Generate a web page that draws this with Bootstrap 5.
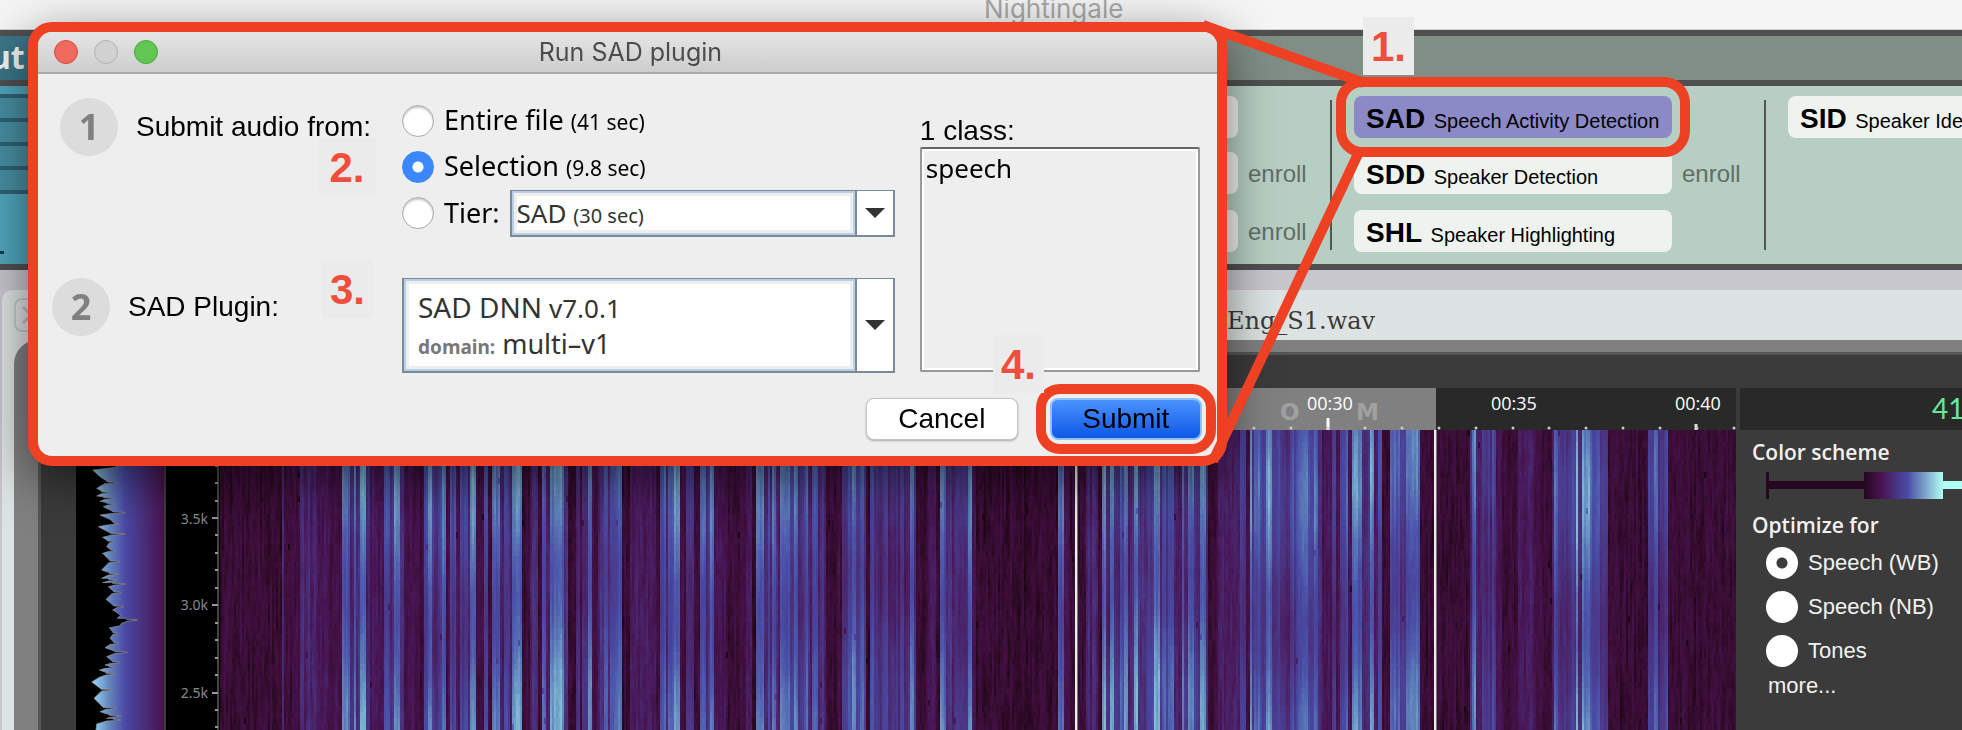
<!DOCTYPE html>
<html lang="en">
<head>
<meta charset="utf-8">
<meta name="viewport" content="width=device-width, initial-scale=1">
<title>Nightingale</title>
<link href="https://cdn.jsdelivr.net/npm/bootstrap@5.3.0/dist/css/bootstrap.min.css" rel="stylesheet">
<style>
:root { --accent: #ee4023; --rule: #505050; }
body { font-family: "Liberation Sans", Arial, sans-serif; color: #000; background: #c8c6cd; overflow: hidden; line-height: 1; }
.app { min-height: 100vh; }
.app-title { height: 30px; background: #f5f5f5; border-bottom: 1px solid #d0d0d0; font: 26px/28px Inter, sans-serif; color: #a9a9a9; padding-left: 984px; margin-bottom: 0; }
.app-title span { display: block; margin-top: -5px; }

.ribbon { border-bottom: 6px solid var(--rule); }
.ribbon-head { height: 56px; border-top: 6px solid var(--rule); border-bottom: 6px solid var(--rule); }
.ribbon-body { height: 178px; }
.input-group-pane { flex: 0 0 872px; background: #51a5bc; }
.input-group-pane .ribbon-head { background: #3b7688; color: #f4f4f4; font: bold 32px/42px "Noto Sans", sans-serif; text-indent: -10px; margin: 0; }
.input-bars { list-style: none; margin: 0; padding: 8px 0 0; }
.input-bars li { height: 24px; background: #468fa4; border-top: 4px solid #2f6273; }
.input-bars li:last-child { height: 28px; border-bottom: 4px solid #2f6273; }
.tick-dash { width: 4px; height: 3px; background: #173c49; margin-top: 57px; }
.task-pane { background: #b7cfc2; overflow: hidden; }
.task-pane .ribbon-head { background: #808e86; }
.task-row { padding: 10px 0 0 48px; }
.task-divider { flex: none; width: 2px; height: 150px; background: #555; margin: 4px 22px 0 25px; }
.task-list { gap: 14px; flex: none; }
.task-line { gap: 10px; }
.task-btn { width: 318px; height: 42px; padding: 0 0 0 12px; border: 0; border-radius: 8px; background: #eff3f0; text-align: left; white-space: nowrap; font-size: 20px; line-height: 46px; color: #000; position: relative; }
.task-btn b { font-size: 28px; margin-right: 3px; }
.task-btn.active-task { background: #8c8ac6; }
.enroll { font-size: 24px; width: 57px; color: #626d66; text-decoration: none; line-height: 44px; }

.ringed { position: relative; }
.ringed::after { content: ""; position: absolute; inset: -19px -18px; border: 10px solid var(--accent); border-radius: 26px; z-index: 3; pointer-events: none; }

.file-win { margin: 20px 0 0 2px; background: #dde3e2; border-top-left-radius: 10px; }
.file-head { height: 50px; padding-left: 12px; font: 24px/28px "DejaVu Serif", serif; color: #3a3a3a; }
.file-head .file-label { margin-left: 1179px; padding-top: 11px; }
.close-tab { width: 34px; height: 34px; padding: 0; border: 2px solid #c3cac8; border-radius: 8px; background: none; flex: none; line-height: 0; }
.viewer { margin-left: 12px; padding: 12px 0 0 24px; background: #808080; border-top-left-radius: 24px; }
.viewer-in { background: #3b3b3b; border: solid #555; border-width: 3px 0 0 3px; padding-left: 35px; }
.toolbar-gap { height: 33px; }
.time-ruler { height: 42px; background: #292929; position: relative; overflow: hidden; }
.hist { width: 88px; background: #000; flex: none; }
.faxis { width: 56px; background: #000; border-left: 2px solid #3c3c3c; flex: none; }
.hist svg, .faxis svg, .time-ruler svg { display: block; }
.spectro { position: relative; background: #2c0a25; height: 300px; }
.spectro canvas { display: block; width: 100%; height: 100%; image-rendering: pixelated; }
.playhead { position: absolute; top: 0; bottom: 0; width: 3px; background: #eee; border-right: 1px solid #777; }

.side { width: 226px; flex: none; color: #f2f2f2; overflow: hidden; }
.side-read { height: 42px; margin-left: 4px; padding-left: 192px; background: #292929; color: #62ec9a; font: 28px/40px Lato, sans-serif; }
.side-body { padding: 10px 0 0 16px; font-size: 22px; }
.side-body h2 { font: 600 21px/24px "Open Sans", sans-serif; margin: 0; }
.slider-svg { display: block; margin: 8px 0 14px 14px; }
.side-opts { padding-top: 4px; }
.side-opt { height: 44px; margin-left: 14px; gap: 10px; white-space: nowrap; }
.side-opt input { appearance: none; width: 32px; height: 32px; border-radius: 50%; background: radial-gradient(#fff 80%, #ddd); margin: 0; flex: none; }
.side-opt input:checked { background: radial-gradient(circle, #3b3b3b 0 5px, #fff 6px); }
.side-more { display: block; color: #f2f2f2; text-decoration: none; margin: 2px 0 0 16px; }

.dlg { position: absolute; left: 28px; top: 22px; width: 61.1%; border: 10px solid var(--accent); border-radius: 24px; background: #eee; box-shadow: 0 14px 50px rgba(0,0,0,.5); z-index: 2; }
.dlg-title { height: 42px; padding: 0 16px; gap: 16px; background: linear-gradient(#e5e5e5, #cdcdcd); border-bottom: 2px solid #aaa; border-radius: 14px 14px 0 0; }
.dlg-title h1 { font: 25px/40px Inter, sans-serif; color: #4c4c4c; margin: 0; text-align: center; padding-right: 114px; }
.light { width: 24px; height: 24px; padding: 0; border: 1px solid; border-radius: 50%; }
.light-r { background: #ee6a5f; border-color: #d6493f; } .light-n { background: #d1d1d1; border-color: #b2b2b2; } .light-g { background: #62c655; border-color: #46a83a; }
.dlg-body { display: grid; grid-template-columns: 364px minmax(0, 1fr) 280px; padding: 24px 17px 15px 0; }
.dlg-fields { margin-right: 25px; font: 27px/34px "Noto Sans", sans-serif; }
.dlg-fields small { font-size: 21px; }
.step { font-size: 28px; height: 58px; gap: 18px; white-space: nowrap; }
.step-1 { padding-left: 22px; margin-bottom: 122px; }
.step-2 { padding-left: 14px; }
.step i { width: 58px; height: 58px; border-radius: 50%; background: #dcdcdc; color: #808080; font: bold 36px/58px "Noto Sans", sans-serif; text-align: center; }
.src { height: 46px; gap: 10px; white-space: nowrap; }
.src > input { appearance: none; width: 32px; height: 32px; margin: 0; flex: none; border-radius: 50%; border: 1px solid #aaa; background: #fff; box-shadow: inset 0 2px 2px #ccc; }
.src > input:checked { border-color: #3b87ff; background: radial-gradient(circle, #fff 0 5px, #3b87ff 6px); box-shadow: none; }
.combo { position: relative; display: flex; border: 2px solid #7a8a99; border-top-width: 1px; background: #fff; color: #333; height: 47px; }
.combo-text { border: 2px solid #b8cfe5; outline: 3px solid #eee; outline-offset: -5px; padding: 3px; }
.combo-tier { font-size: 26px; }
.combo-tier small { font-size: 20px; }
.combo-arrow { width: 38px; border-left: 2px solid #7a8a99; flex: none; }
.combo-arrow::before { content: ""; border: solid transparent; border-width: 10px 10px 0; border-top-color: #333; }
.combo select { position: absolute; inset: 0; width: 100%; height: 100%; opacity: 0; }
.combo-plugin { height: 95px; margin-top: 42px; }
.combo-plugin .combo-text { padding: 8px 12px; line-height: 36px; }
.combo-plugin .plug-name { font-size: 28px; }
.combo-plugin .plug-ver { font-size: 26px; }
.combo-plugin .plug-dom { font: bold 19px/32px "Noto Sans", sans-serif; color: #777; }
.class-label { font-size: 28px; line-height: 32px; margin-top: 17px; }
.class-list { width: 100%; height: 225px; padding: 1px 4px; border: 2px solid #999; border-top-color: #666; outline: 2px solid #fff; outline-offset: -4px; background: #eee; font: 26px/36px "Noto Sans", sans-serif; overflow: hidden; }
.class-list option { padding: 0; color: #000; min-height: 36px; }
.dlg-foot { gap: 32px; padding: 0 15px 16px 0; margin-top: 10px; }
.dlg-btn { width: 152px; height: 42px; border-radius: 8px; border: 1px solid #c4c4c4; background: #fff; font-size: 28px; line-height: 38px; padding: 0; color: #000; box-shadow: 0 1px 2px #aaa; }
.dlg-btn.go { border: 2px solid #8fc0ff; background: linear-gradient(#4b92ff, #0d58e6); box-shadow: none; }
.dlg-btn.ringed::after { inset: -16px; border-radius: 24px; }

.links { position: absolute; left: 0; top: 0; z-index: 4; pointer-events: none; }
.note { position: absolute; z-index: 5; width: 51px; height: 58px; background: #ebebeb; color: #f04e3c; font: bold 42px/60px "Liberation Sans", Arial, sans-serif; text-align: center; }
.note-1 { left: 1363px; top: 17px; } .note-2 { left: 318px; top: 138px; width: 58px; } .note-3 { left: 322px; top: 260px; } .note-4 { left: 993px; top: 335px; }
</style>
</head>
<body>
<main class="app d-flex flex-column position-relative">
  <header class="app-title"><span>Nightingale</span></header>

  <section class="ribbon d-flex">
    <div class="input-group-pane">
      <h2 class="ribbon-head">ut</h2>
      <div class="ribbon-body">
        <ul class="input-bars"><li></li><li></li><li></li><li></li></ul>
        <div class="tick-dash"></div>
      </div>
    </div>
    <div class="task-pane flex-fill">
      <div class="ribbon-head"></div>
      <div class="ribbon-body task-row d-flex align-items-start">
        <div class="task-list d-flex flex-column">
          <div class="task-line d-flex"><div class="task-btn"></div></div>
          <div class="task-line d-flex"><div class="task-btn"></div><a class="enroll" href="#">enroll</a></div>
          <div class="task-line d-flex"><div class="task-btn"></div><a class="enroll" href="#">enroll</a></div>
        </div>
        <div class="task-divider"></div>
        <div class="task-list d-flex flex-column">
          <div class="task-line d-flex"><button class="task-btn active-task ringed"><b>SAD</b> Speech Activity Detection</button></div>
          <div class="task-line d-flex"><button class="task-btn"><b>SDD</b> Speaker Detection</button><a class="enroll" href="#">enroll</a></div>
          <div class="task-line d-flex"><button class="task-btn"><b>SHL</b> Speaker Highlighting</button></div>
        </div>
        <div class="task-divider"></div>
        <div class="task-list d-flex flex-column">
          <div class="task-line d-flex"><button class="task-btn"><b>SID</b> Speaker Identification</button></div>
        </div>
      </div>
    </div>
  </section>

  <section class="file-win flex-fill">
    <div class="file-head d-flex align-items-center">
      <button class="close-tab"><svg width="28" height="28" viewBox="0 0 28 28" fill="none" stroke="#b9c0be" stroke-width="3"><path d="M6 6l16 16M22 6L6 22"/></svg></button>
      <span class="file-label">Eng_S1.wav</span>
    </div>
    <div class="viewer">
      <div class="viewer-in">
        <div class="toolbar-gap"></div>
        <div class="d-flex">
          <div class="hist"><div style="height:42px"></div>
            <svg width="88" height="300" viewBox="228 210 264 900">
              <defs><linearGradient id="hg"><stop offset=".22" stop-color="#8cc8ea"/><stop offset=".38" stop-color="#6484bc"/><stop offset=".56" stop-color="#4a49a4"/><stop offset="1" stop-color="#48124d"/></linearGradient></defs>
              <rect x="228" y="210" width="264" height="900" fill="url(#hg)"/>
              <polygon id="histEdge" fill="#000" stroke="#999" stroke-width="2"/>
            </svg>
          </div>
          <div class="faxis"><div style="height:42px"></div><svg id="freq" width="54" height="300" font-family="Noto Sans, sans-serif" font-size="14" fill="#8a8a8a"></svg></div>
          <div class="flex-fill" style="min-width:0">
            <div class="time-ruler"><svg id="ruler" width="1516" height="42" font-family="Open Sans, sans-serif"></svg></div>
            <div class="spectro">
              <canvas id="spec" width="758" height="50"></canvas>
              <div class="playhead" style="left:56.4%"></div>
              <div class="playhead" style="left:80.1%"></div>
            </div>
          </div>
          <aside class="side">
            <div class="side-read">41</div>
            <div class="side-body">
              <h2>Color scheme</h2>
              <svg class="slider-svg" width="200" height="27">
                <defs><linearGradient id="cg"><stop offset="0" stop-color="#25071f"/><stop offset=".2" stop-color="#48124d"/><stop offset=".55" stop-color="#4a4aa4"/><stop offset="1" stop-color="#b0fff3"/></linearGradient></defs>
                <path d="M0 0h3v9h96v8H3v10H0z" fill="#25071f"/><path d="M176 9h24v8h-24z" fill="#b0fff3"/><path d="M98 0h79v27H98z" fill="url(#cg)"/>
              </svg>
              <h2>Optimize for</h2>
              <div class="side-opts">
                <label class="side-opt d-flex align-items-center"><input type="radio" name="opt" checked>Speech (WB)</label>
                <label class="side-opt d-flex align-items-center"><input type="radio" name="opt">Speech (NB)</label>
                <label class="side-opt d-flex align-items-center"><input type="radio" name="opt">Tones</label>
              </div>
              <a class="side-more" href="#">more...</a>
            </div>
          </aside>
        </div>
      </div>
    </div>
  </section>

  <form class="dlg">
    <div class="dlg-title d-flex align-items-center">
      <button type="button" class="light light-r"></button><button type="button" class="light light-n"></button><button type="button" class="light light-g"></button>
      <h1 class="flex-fill">Run SAD plugin</h1>
    </div>
    <div class="dlg-body">
      <div>
        <div class="step step-1 d-flex align-items-center"><i>1</i>Submit audio from:</div>
        <div class="step step-2 d-flex align-items-center"><i>2</i>SAD Plugin:</div>
      </div>
      <div class="dlg-fields">
        <div class="src d-flex align-items-center"><input type="radio" name="src" id="s1"><label for="s1">Entire file <small>(41 sec)</small></label></div>
        <div class="src d-flex align-items-center"><input type="radio" name="src" id="s2" checked><label for="s2">Selection <small>(9.8 sec)</small></label></div>
        <div class="src d-flex align-items-center"><input type="radio" name="src" id="s3"><label for="s3">Tier:</label>
          <div class="combo combo-tier flex-fill"><div class="combo-text flex-fill">SAD <small>(30 sec)</small></div><span class="combo-arrow d-flex align-items-center justify-content-center"></span><select aria-labelledby="s3"><option>SAD (30 sec)</option></select></div>
        </div>
        <div class="combo combo-plugin"><div class="combo-text flex-fill"><div><span class="plug-name">SAD DNN</span> <span class="plug-ver">v7.0.1</span></div><div><span class="plug-dom">domain:</span> multi–v1</div></div><span class="combo-arrow d-flex align-items-center justify-content-center"></span><select><option>SAD DNN v7.0.1</option></select></div>
      </div>
      <div>
        <label class="class-label d-block" for="cls">1 class:</label>
        <select class="class-list d-block" id="cls" multiple><option>speech</option></select>
      </div>
    </div>
    <div class="dlg-foot d-flex justify-content-end">
      <button type="button" class="dlg-btn">Cancel</button>
      <button type="button" class="dlg-btn go ringed">Submit</button>
    </div>
  </form>

  <svg class="links" width="1400" height="480" stroke="#ee4023" stroke-width="10"><path d="M1203 25L1364 83M1358 154L1213 461"/></svg>
  <span class="note note-1">1.</span><span class="note note-2">2.</span><span class="note note-3">3.</span><span class="note note-4">4.</span>
</main>
<script src="https://cdn.jsdelivr.net/npm/bootstrap@5.3.0/dist/js/bootstrap.bundle.min.js"></script>
<script>
// average spectrum: outline as x,y pairs; the deep notches are drawn narrow
const edge = '340,210 290,235 335,250 300,270 345,290 348,322 278,330 300,350 350,368 290,385 325,398 290,408 338,415 300,424 345,432 310,440 375,458 300,465 330,478 355,492 295,500 375,522 308,532 340,545 320,560 345,572 308,580 358,605 305,630 355,642 305,655 350,660 308,668 375,672 325,680 362,698 318,718 370,740 338,750 362,765 352,775 412,780 365,790 358,798 328,803 352,820 330,835 355,850 315,863 382,877 320,890 358,907 315,915 342,922 298,930 345,942 298,952 275,966 338,990 282,1015 345,1045 300,1055 362,1068 320,1075 362,1080 290,1092 288,1112'.split(' ').map(p => p.split(',').map(Number));
const outline = [];
edge.forEach(([x, y], i) => {
  const prev = edge[i - 1], next = edge[i + 1];
  if (prev && next && x - prev[0] > 18 && x - next[0] > 18) {
    outline.push([prev[0] + (x - prev[0]) * .4, y - 5], [prev[0] + (x - prev[0]) * .45, y - 2], [x, y - 1], [x, y + 1], [next[0] + (x - next[0]) * .4, y + 3]);
  } else outline.push([x, y]);
});
document.getElementById('histEdge').setAttribute('points', '220,200 ' + outline.map(p => p.join()).join(' ') + ' 220,1120');

// frequency axis
let f = '<path d="M52 0v300" stroke="#444" stroke-width="2"/>';
for (let i = -4; i < 13; i++) {
  const y = Math.round(88 + i * 17.45), major = i % 5 === 0;
  f += `<path d="M${major ? 46 : 49} ${y}H52" stroke="#999" stroke-width="2"/>`;
}
[['3.5k', 94], ['3.0k', 180], ['2.5k', 268]].forEach(t => f += `<text x="42" y="${t[1]}" text-anchor="end">${t[0]}</text>`);
document.getElementById('freq').innerHTML = f;

// time ruler
let r = '<path d="M856 0h360v42H856z" fill="#808080"/><g font-family="DejaVu Sans" font-weight="bold" font-size="23" fill="#a0a0a0"><text x="1060" y="32">O</text><text x="1136" y="32">M</text></g><g fill="#fff" font-size="18">';
[['00:30', 1087], ['00:35', 1271], ['00:40', 1455]].forEach(t => r += `<text x="${t[1]}" y="22">${t[0]}</text>`);
r += '</g><path d="M1108 30v12" stroke="#fff" stroke-width="3"/><path d="M1476 36v6" stroke="#ddd" stroke-width="3"/>';
for (let i = -3; i < 12; i++) r += `<circle cx="${Math.round(1108 + i * 36.9)}" cy="40" r="1.5" fill="#ccc"/>`;
document.getElementById('ruler').innerHTML = r;

// spectrogram: [start x, energy] bands
const bands = '0:1 62:3 64:1.3 80:2.8 97:2 110:1.6 121:7 130:4 134:8 136:3 140:8 146:3.5 150:2.2 164:6 170:4 173:8 180:3 184:1.7 200:1.1 204:6 208:8 212:4 218:5 222:7 226:1.5 229:5 236:2 240:5 247:3 250:8 255:1.5 264:6 268:1 272:7 280:2.5 284:5 288:3 292:8 302:1 310:3 318:1 322:6 326:3 330:8 344:3 348:1 356:4 360:1.5 362:4 368:7 371:1.5 378:3 383:6 388:3 390:6 395:7 402:1 410:2.3 436:1 440:6 445:3 448:6 454:8 460:1.5 466:4 474:1.2 480:7 486:4 490:7 494:2 506:1.2 526:3 531:.5 536:7 543:3 548:6 550:3 552:7 556:3 560:7 570:5 574:7 577:4 584:6 588:3 592:6 598:3 606:1 618:1.5 622:4 628:6 631:8 636:5 640:7 643:4 646:1 649:6 654:4 664:5.5 668:3.6 680:5 684:3.4 690:7.5 694:4.5 696:1 708:2.3 716:1 720:7 726:3 736:4 740:3.3 748:7.5 752:2 755:.9 838:6.5 844:2 850:1 866:2.6 878:1 882:8 886:4 889:8 894:4 900:6 904:7.5 908:3 913:8 917:3 926:5 934:8 940:4 942:6 945:4 948:6 954:3 961:7 964:4 968:7 974:4 980:8 986:4 988:1 998:2.5 1020:4 1026:1.5 1030:8 1032:3 1034:6 1038:7.5 1040:5 1046:8 1052:4 1058:5 1062:3.5 1070:5 1078:7 1088:5 1094:7 1098:3 1101:2 1112:5 1116:2 1120:5 1125:6 1128:2 1132:7.5 1142:3 1150:8 1154:2.5 1158:5 1162:1 1170:6 1180:4.5 1186:7 1200:1 1250:4 1252:7 1256:2.5 1262:3.6 1272:5 1276:2 1282:1 1298:2.4 1314:1.5 1322:1 1332:3 1334:6.5 1338:4 1350:5 1356:8.5 1358:4 1362:8 1370:6 1380:4.6 1388:1 1428:4 1434:6.5 1438:4 1444:5 1448:1'.split(' ').map(s => s.split(':').map(Number));
const ramp = ['1c0512', '3a0d35', '471553', '4a2870', '4a3a8a', '48479f', '4f5cae', '5c7cb8', '70a0c8', '90d0dc'].map(h => [0, 2, 4].map(i => parseInt(h.substr(i, 2), 16)));
let seed = 7;
const rnd = () => (seed = (seed * 16807) % 2147483647) / 2147483647;
const W = 758, H = 50, ctx = document.getElementById('spec').getContext('2d'), im = ctx.createImageData(W, H);
let b = 0;
for (let x = 0; x < W; x++) {
  while (b < bands.length - 1 && bands[b + 1][0] <= x * 2) b++;
  const e = bands[b][1], col = e > 2.5 ? (rnd() - .4) * 1.4 : (rnd() - .5) * .5, ph = Math.sin(x / 23) * 5;
  let n = 0;
  for (let y = 0; y < H; y++) {
    n = n * .75 + (rnd() - .5) * .7;
    const shape = e > 3 ? .84 + .14 * Math.cos((y + ph - 6) / 44 * 6.283) : 1;
    const v = Math.max(0, Math.min(8.6, (e + col) * shape + n * (e > 3 ? .6 : .85) - (rnd() > .998 ? 1.5 : 0)));
    const i = Math.floor(v), t = v - i, o = (y * W + x) * 4;
    for (let c = 0; c < 3; c++) im.data[o + c] = ramp[i][c] * (1 - t) + ramp[i + 1][c] * t;
    im.data[o + 3] = 255;
  }
}
ctx.putImageData(im, 0, 0);
</script>
</body>
</html>
